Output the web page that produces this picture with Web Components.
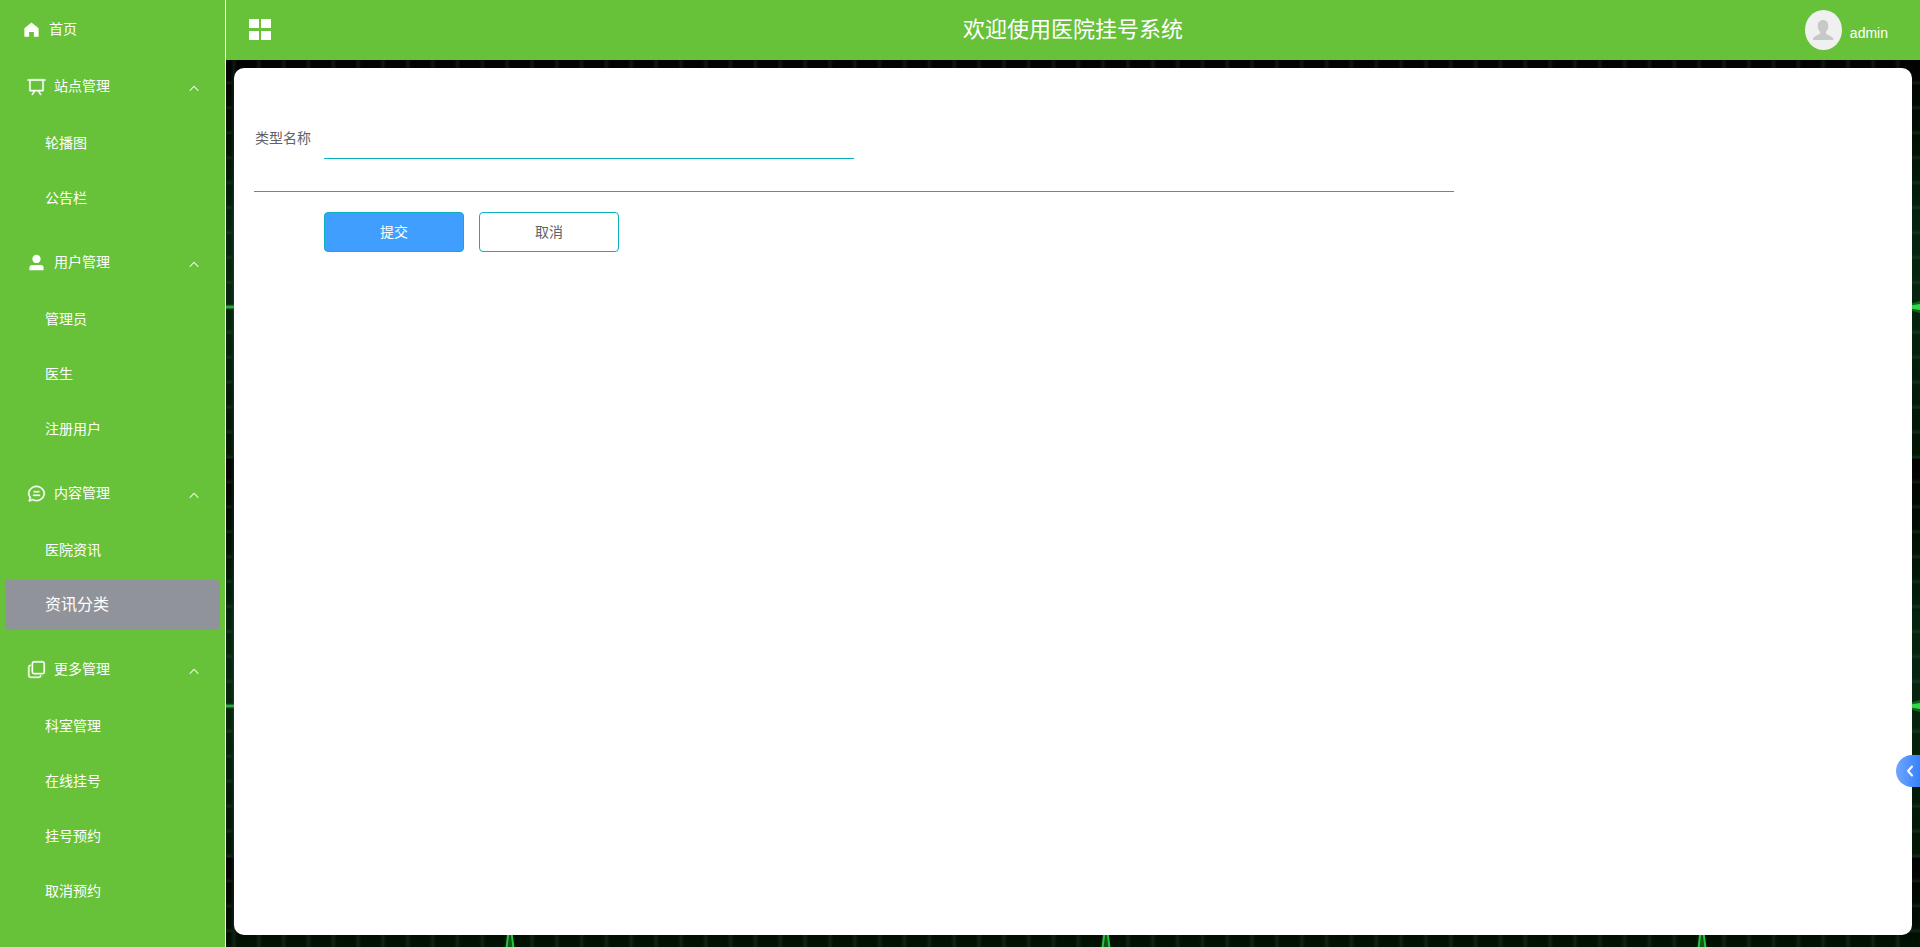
<!DOCTYPE html>
<html lang="zh-CN">
<head>
<meta charset="utf-8">
<title>医院挂号系统</title>
<style>
html, body { height: 100%; margin: 0; }
body { font: 14px/20px "Liberation Sans", "Noto Sans CJK SC", sans-serif; color: #606266; }
</style>
</head>
<body>
<admin-app></admin-app>

<template id="t-app">
  <style>
    :host { display: flex; min-height: 100%; }
    .main { flex: 1; min-width: 0; display: flex; flex-direction: column; }
    .content { flex: 1; position: relative; display: flex; padding: 8px 8px 12px; }
    pulse-backdrop { position: absolute; inset: 0; }
    type-form { flex: 1; position: relative; }
    side-tab { position: fixed; right: 0; bottom: 160px; }
  </style>
  <side-menu>
    <menu-link icon="home" home>首页</menu-link>
    <menu-group icon="board" label="站点管理">
      <menu-link>轮播图</menu-link>
      <menu-link>公告栏</menu-link>
    </menu-group>
    <menu-group icon="user" label="用户管理">
      <menu-link>管理员</menu-link>
      <menu-link>医生</menu-link>
      <menu-link>注册用户</menu-link>
    </menu-group>
    <menu-group icon="chat" label="内容管理">
      <menu-link>医院资讯</menu-link>
      <menu-link active>资讯分类</menu-link>
    </menu-group>
    <menu-group icon="copy" label="更多管理">
      <menu-link>科室管理</menu-link>
      <menu-link>在线挂号</menu-link>
      <menu-link>挂号预约</menu-link>
      <menu-link>取消预约</menu-link>
    </menu-group>
  </side-menu>
  <div class="main">
    <top-bar user="admin">欢迎使用医院挂号系统</top-bar>
    <div class="content">
      <pulse-backdrop></pulse-backdrop>
      <type-form></type-form>
    </div>
  </div>
  <side-tab></side-tab>
</template>

<template id="t-side">
  <style>
    :host { display: block; width: 225px; padding: 4px 0 0; background: #67c23a; border-right: 1px solid #fff; color: #fff; }
  </style>
  <nav aria-label="主菜单"><slot></slot></nav>
</template>

<template id="t-link">
  <style>
    :host { display: block; margin: 0 5px; }
    a { display: flex; align-items: center; gap: 8px; height: 50px; padding-left: 40px; color: #fff; text-decoration: none; border-radius: 0 4px 4px 0; }
    :host([home]) a { padding-left: 17px; }
    :host([active]) a { background: #909399; font-size: 16px; }
    ui-icon { width: 19px; height: 19px; }
  </style>
  <a href="#"><slot></slot></a>
</template>

<template id="t-group">
  <style>
    :host { display: block; padding: 7px 0; }
    button { display: flex; align-items: center; gap: 8px; width: 100%; height: 50px; padding: 0 25px 0 27px; border: 0; background: none; color: inherit; font: inherit; cursor: pointer; }
    ui-icon { width: 19px; height: 19px; }
    ui-icon.arrow { width: 12px; height: 12px; margin: 4px 0 0 auto; }
    .items { display: flex; flex-direction: column; gap: 5px; padding-top: 7px; }
  </style>
  <button type="button" aria-expanded="true"><ui-icon class="lead"></ui-icon><span></span><ui-icon class="arrow" name="up"></ui-icon></button>
  <div class="items"><slot></slot></div>
</template>

<template id="t-top">
  <style>
    :host { display: grid; grid-template-columns: 1fr auto 1fr; align-items: center; height: 60px; background: #67c23a; color: #fff; }
    .toggle { justify-self: start; margin-left: 23px; padding: 0; border: 0; background: none; color: inherit; cursor: pointer; line-height: 0; }
    .toggle svg { width: 22px; height: 22px; }
    h1 { margin: 0; font-size: 22px; line-height: 32px; font-weight: 400; }
    .user { justify-self: end; display: flex; align-items: center; gap: 8px; margin-right: 32px; color: #fff; text-decoration: none; }
    .user svg { width: 37px; height: 40px; }
    .user span { padding-top: 6px; }
  </style>
  <button class="toggle" type="button" aria-label="折叠菜单"><svg viewBox="0 0 22 22" fill="#fff"><path d="M0 0h10v9H0zM12 0h10v9H12zM0 12h10v9H0zM12 12h10v9H12z"/></svg></button>
  <h1><slot></slot></h1>
  <a class="user" href="#"><svg viewBox="0 0 37 40"><ellipse cx="18.500" cy="20" rx="18.500" ry="20" fill="#f0f0f0"/><path fill="#c8c8c8" d="M18 10c3.200 0 5.300 2.400 5.300 6 0 2.600-1 4.700-2.400 5.900v1.500c1 1.500 7.400 2.700 7.400 5.500V30H8v-1.100c0-2.800 6.200-4 7.200-5.500v-1.500c-1.500-1.200-2.400-3.300-2.400-5.900 0-3.600 2-6 5.200-6z"/></svg><span></span></a>
</template>

<template id="t-form">
  <style>
    :host { display: block; box-sizing: border-box; padding: 50px 20px 20px; background: #fff; border-radius: 10px; }
    form { max-width: 1200px; }
    .fields { padding-bottom: 32px; border-bottom: 1px solid #0bb0bd; }
    .field { display: flex; width: 50%; }
    label { width: 70px; line-height: 40px; box-sizing: border-box; padding-left: 1px; }
    input { flex: 1; min-width: 0; height: 41px; box-sizing: border-box; padding: 0 15px; border: 0; border-bottom: 1px solid #0bb0bd; border-radius: 0; background: none; font: inherit; color: inherit; outline: none; }
    .actions { display: flex; gap: 15px; padding: 20px 0 0 70px; }
    button { width: 140px; height: 40px; border: 1px solid #0bb0bd; border-radius: 4px; padding: 0; background: #fff; color: #606266; font: inherit; cursor: pointer; }
    .primary { background: #409eff; color: #fff; }
  </style>
  <form>
    <div class="fields"><div class="field"><label for="name">类型名称</label><input id="name" type="text"></div></div>
    <div class="actions"><button class="primary" type="button">提交</button><button type="button">取消</button></div>
  </form>
</template>

<template id="t-tab">
  <style>
    :host { display: block; }
    button { display: flex; align-items: center; justify-content: center; width: 24px; height: 32px; padding: 0; padding-left: 4px; border: 0; border-radius: 16px 0 0 16px; background: linear-gradient(90deg, #71a6ff, #3482ff); cursor: pointer; }
    svg { width: 8px; height: 12px; }
  </style>
  <button type="button" aria-label="展开"><svg viewBox="0 0 8 12" fill="none" stroke="#fff" stroke-width="2" stroke-linecap="round" stroke-linejoin="round"><path d="M6 1.500 2 6l4 4.500"/></svg></button>
</template>

<template id="t-back">
  <style>
    :host { display: block; overflow: hidden; background: #010f04; }
    svg { display: block; width: 100%; height: 100%; }
  </style>
  <svg aria-hidden="true">
    <defs>
      <linearGradient id="shade" x2="0" y2="1">
        <stop offset="0" stop-color="#020202"/><stop offset=".2" stop-color="#011003"/><stop offset=".4" stop-color="#04220d"/>
        <stop offset=".62" stop-color="#06240e"/><stop offset=".8" stop-color="#041c09"/><stop offset="1" stop-color="#031405"/>
      </linearGradient>
      <linearGradient id="beam" x2="0" y2="1">
        <stop offset="0" stop-color="#0a7a18" stop-opacity="0"/><stop offset=".5" stop-color="#3fd050"/><stop offset="1" stop-color="#0a7a18" stop-opacity="0"/>
      </linearGradient>
      <pattern id="cell" width="24.830" height="24.940" patternUnits="userSpaceOnUse">
        <path d="M8 0v25M0 23h25" stroke="#8fc79a" stroke-opacity=".05" stroke-width="5"/>
        <path d="M8 0v25M0 23h25" stroke="#8fc79a" stroke-opacity=".05" stroke-width="2"/>
      </pattern>
      <pattern id="tile" width="596" height="399" patternUnits="userSpaceOnUse">
        <path fill="url(#shade)" d="M0 0h596v399H0z"/>
        <path fill="url(#cell)" d="M0 0h596v399H0z"/>
        <path fill="url(#beam)" d="M0 244h596v6H0z"/>
        <path fill="#17a02a" fill-opacity=".5" d="M480 247l22-6v12z"/>
        <path fill="#2fdc45" d="M484 247l18-3v6z"/>
        <path d="M278 110 284 62l6 48" fill="#0b5a17" stroke="#27c43b" stroke-width="2"/>
      </pattern>
    </defs>
    <rect width="100%" height="100%" fill="url(#tile)"/>
  </svg>
</template>

<script>
const ICONS = {
  home: 'M512 128 128 447.936V896h255.936V640H640v256h255.936V447.936z',
  board: 'M32 128h960v64H32zM192 192v512h640V192zm-64-64h768v608a32 32 0 0 1-32 32H160a32 32 0 0 1-32-32zM322.176 960H248.320l144.640-250.560 55.424 32zm453.888 0h-73.856L576 741.440l55.424-32z',
  user: 'M288 320a224 224 0 1 0 448 0 224 224 0 1 0-448 0zm544 608H160a32 32 0 0 1-32-32v-96a160 160 0 0 1 160-160h448a160 160 0 0 1 160 160v96a32 32 0 0 1-32 32z',
  chat: 'm174.720 855.680 135.296-45.120 23.680 11.840C388.096 849.536 448.576 864 512 864c211.840 0 384-166.784 384-352S723.840 160 512 160 128 326.784 128 512c0 69.120 24.960 139.264 70.848 199.232l22.080 28.800-46.272 115.584zm-45.248 82.560A32 32 0 0 1 89.600 896l58.368-145.920C94.720 680.320 64 596.864 64 512 64 299.904 256 96 512 96s448 203.904 448 416-192 416-448 416a461.056 461.056 0 0 1-206.912-48.384l-175.616 58.560zM352 576h320q32 0 32 32t-32 32H352q-32 0-32-32t32-32zm32-192h256q32 0 32 32t-32 32H384q-32 0-32-32t32-32z',
  copy: 'M768 832a128 128 0 0 1-128 128H192A128 128 0 0 1 64 832V384a128 128 0 0 1 128-128v64a64 64 0 0 0-64 64v448a64 64 0 0 0 64 64h448a64 64 0 0 0 64-64h64zM384 128a64 64 0 0 0-64 64v448a64 64 0 0 0 64 64h448a64 64 0 0 0 64-64V192a64 64 0 0 0-64-64H384zm0-64h448a128 128 0 0 1 128 128v448a128 128 0 0 1-128 128H384a128 128 0 0 1-128-128V192A128 128 0 0 1 384 64z',
  up: 'm488.832 344.320-339.840 356.672a32 32 0 0 0 0 44.160l.384.384a29.440 29.440 0 0 0 42.688 0l320-335.872 319.872 335.872a29.440 29.440 0 0 0 42.688 0l.384-.384a32 32 0 0 0 0-44.160L535.168 344.320a32 32 0 0 0-46.336 0z'
};

class Templated extends HTMLElement {
  constructor() {
    super();
    this.attachShadow({ mode: 'open' });
    const id = this.constructor.template;
    if (id) this.shadowRoot.append(document.getElementById(id).content.cloneNode(true));
  }
}

class UiIcon extends Templated {
  static observedAttributes = ['name'];
  attributeChangedCallback(_, __, name) {
    const weight = name === 'home' || name === 'user' ? 0 : 24;
    this.shadowRoot.innerHTML = `<style>:host{display:block;flex:none}svg{display:block;width:100%;height:100%}</style><svg viewBox="0 0 1024 1024" fill="currentColor" stroke="currentColor" stroke-width="${weight}" aria-hidden="true"><path d="${ICONS[name]}"/></svg>`;
  }
}
class MenuLink extends Templated {
  static template = 't-link';
  connectedCallback() {
    const name = this.getAttribute('icon');
    if (name && !this.shadowRoot.querySelector('ui-icon')) {
      const icon = document.createElement('ui-icon');
      icon.setAttribute('name', name);
      this.shadowRoot.querySelector('a').prepend(icon);
    }
  }
}
class MenuGroup extends Templated {
  static template = 't-group';
  connectedCallback() {
    this.shadowRoot.querySelector('.lead').setAttribute('name', this.getAttribute('icon'));
    this.shadowRoot.querySelector('span').textContent = this.getAttribute('label');
  }
}
class TopBar extends Templated {
  static template = 't-top';
  connectedCallback() { this.shadowRoot.querySelector('.user span').textContent = this.getAttribute('user'); }
}
class SideMenu extends Templated { static template = 't-side'; }
class TypeForm extends Templated { static template = 't-form'; }
class SideTab extends Templated { static template = 't-tab'; }
class PulseBackdrop extends Templated { static template = 't-back'; }
class AdminApp extends Templated { static template = 't-app'; }

customElements.define('ui-icon', UiIcon);
customElements.define('menu-link', MenuLink);
customElements.define('menu-group', MenuGroup);
customElements.define('top-bar', TopBar);
customElements.define('side-menu', SideMenu);
customElements.define('type-form', TypeForm);
customElements.define('side-tab', SideTab);
customElements.define('pulse-backdrop', PulseBackdrop);
customElements.define('admin-app', AdminApp);
</script>
</body>
</html>
